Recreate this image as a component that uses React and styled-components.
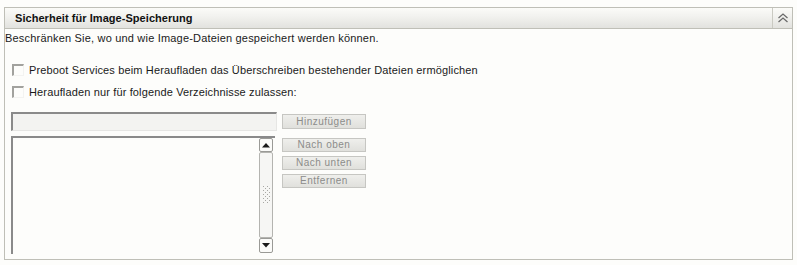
import React from "react";
import styled, { createGlobalStyle } from "styled-components";

const Global = createGlobalStyle`
  html, body { margin: 0; padding: 0; background: #fdfdfb; }
  body { font-family: "Liberation Sans", Arial, sans-serif; color: #1a1a1a; }
`;

const Panel = styled.section`
  box-sizing: border-box;
  margin: 7px 0 0 4px;
  width: 789px;
  height: 253px;
  border: 1px solid #bfbfb7;
  background: #fdfdfb;
`;

const Header = styled.header`
  display: flex;
  align-items: stretch;
  height: 20px;
  border-bottom: 1px solid #bfbfb7;
  background: linear-gradient(#fbfbf8, #f1f1ee 45%, #e2e2de);
`;

const Title = styled.h2`
  flex: 1;
  margin: 0;
  padding-left: 10px;
  font-size: 11px;
  font-weight: bold;
  line-height: 20px;
  letter-spacing: 0.05px;
  color: #111;
`;

const CollapseCell = styled.button`
  width: 20px;
  padding: 0;
  border: none;
  border-left: 1px solid #cacac2;
  background: transparent;
  display: flex;
  align-items: center;
  justify-content: center;
`;

const Description = styled.p`
  margin: 2px 0 0;
  font-size: 11px;
  line-height: 14px;
  letter-spacing: 0.19px;
`;

const Options = styled.div`
  margin-top: 14px;
  padding-left: 7px;
`;

const CheckRow = styled.label`
  display: flex;
  align-items: center;
  gap: 5px;
  height: 22px;
  font-size: 11px;
  letter-spacing: 0.14px;
`;

const Box = styled.span`
  box-sizing: border-box;
  width: 12px;
  height: 12px;
  border-top: 2px solid #a2a29e;
  border-left: 2px solid #a2a29e;
  border-right: 1px solid #f3f3f1;
  border-bottom: 1px solid #f3f3f1;
  background: #fdfdfb;
`;

const Editor = styled.div`
  margin-top: 9px;
  padding-left: 6px;
`;

const FieldRow = styled.div`
  display: flex;
  align-items: center;
  gap: 5px;
`;

const TextField = styled.div`
  box-sizing: border-box;
  width: 266px;
  height: 19px;
  border-top: 2px solid #8a8a8a;
  border-left: 2px solid #8a8a8a;
  border-right: 1px solid #e6e6e4;
  border-bottom: 1px solid #e6e6e4;
  background: #f3f3f1;
`;

const ListRow = styled.div`
  display: flex;
  align-items: flex-start;
  gap: 7px;
  margin-top: 5px;
`;

const ListBox = styled.div`
  box-sizing: border-box;
  width: 264px;
  height: 118px;
  border-top: 2px solid #8a8a8a;
  border-left: 2px solid #8a8a8a;
  padding-right: 2px;
  display: flex;
  justify-content: flex-end;
  background: #fdfdfb;
`;

const Scrollbar = styled.div`
  display: flex;
  flex-direction: column;
  width: 14px;
  height: 115px;
`;

const ArrowBtn = styled.div`
  box-sizing: border-box;
  height: ${(p) => p.$h}px;
  border: 1px solid #9a9a96;
  border-radius: 2px;
  background: #fbfbf9;
  display: flex;
  align-items: center;
  justify-content: center;
`;

const Thumb = styled.div`
  flex: 1;
  box-sizing: border-box;
  border: 1px solid #b4b4b0;
  border-radius: 2px;
  background: #f6f6f4;
  display: flex;
  align-items: center;
  justify-content: center;
`;

const Actions = styled.div`
  display: flex;
  flex-direction: column;
  gap: 4px;
  padding-top: 2px;
`;

const ActionButton = styled.button`
  box-sizing: border-box;
  width: 84px;
  height: ${(p) => p.$h || 14}px;
  padding: 0;
  border: 1px solid #c6c6c2;
  background: linear-gradient(#efefec, #e0e0dc);
  color: #8c8c8a;
  font-family: "Liberation Sans", Arial, sans-serif;
  font-size: 10px;
  letter-spacing: 0.5px;
  line-height: 12px;
`;

const Up = () => (
  <svg width="12" height="10" viewBox="0 0 12 10">
    <path d="M1.5 5 L6 1 L10.5 5" fill="none" stroke="#6a6a6a" strokeWidth="1.3" />
    <path d="M1.5 9 L6 5 L10.5 9" fill="none" stroke="#6a6a6a" strokeWidth="1.3" />
  </svg>
);

const Tri = ({ down }) => (
  <svg width="8" height="5" viewBox="0 0 8 5">
    <path d={down ? "M0 0 H8 L4 4.5 Z" : "M0 4.5 H8 L4 0 Z"} fill="#1a1a1a" />
  </svg>
);

const Grip = () => (
  <svg width="7" height="18" viewBox="0 0 7 18">
    {Array.from({ length: 9 }).map((_, r) =>
      [0, 1, 2, 3].map((c) =>
        (r + c) % 2 === 0 ? (
          <rect key={r + "-" + c} x={c * 2} y={r * 2} width="1" height="1" fill="#a8a8a4" />
        ) : null
      )
    )}
  </svg>
);

export default function App() {
  return (
    <>
      <Global />
      <Panel>
        <Header>
          <Title>Sicherheit für Image-Speicherung</Title>
          <CollapseCell aria-label="Einklappen">
            <Up />
          </CollapseCell>
        </Header>
        <Description>Beschränken Sie, wo und wie Image-Dateien gespeichert werden können.</Description>
        <Options>
          <CheckRow>
            <Box />
            Preboot Services beim Heraufladen das Überschreiben bestehender Dateien ermöglichen
          </CheckRow>
          <CheckRow>
            <Box />
            Heraufladen nur für folgende Verzeichnisse zulassen:
          </CheckRow>
        </Options>
        <Editor>
          <FieldRow>
            <TextField />
            <ActionButton $h={15}>Hinzufügen</ActionButton>
          </FieldRow>
          <ListRow>
            <ListBox>
              <Scrollbar>
                <ArrowBtn $h={14}>
                  <Tri />
                </ArrowBtn>
                <Thumb>
                  <Grip />
                </Thumb>
                <ArrowBtn $h={15}>
                  <Tri down />
                </ArrowBtn>
              </Scrollbar>
            </ListBox>
            <Actions>
              <ActionButton>Nach oben</ActionButton>
              <ActionButton>Nach unten</ActionButton>
              <ActionButton>Entfernen</ActionButton>
            </Actions>
          </ListRow>
        </Editor>
      </Panel>
    </>
  );
}
